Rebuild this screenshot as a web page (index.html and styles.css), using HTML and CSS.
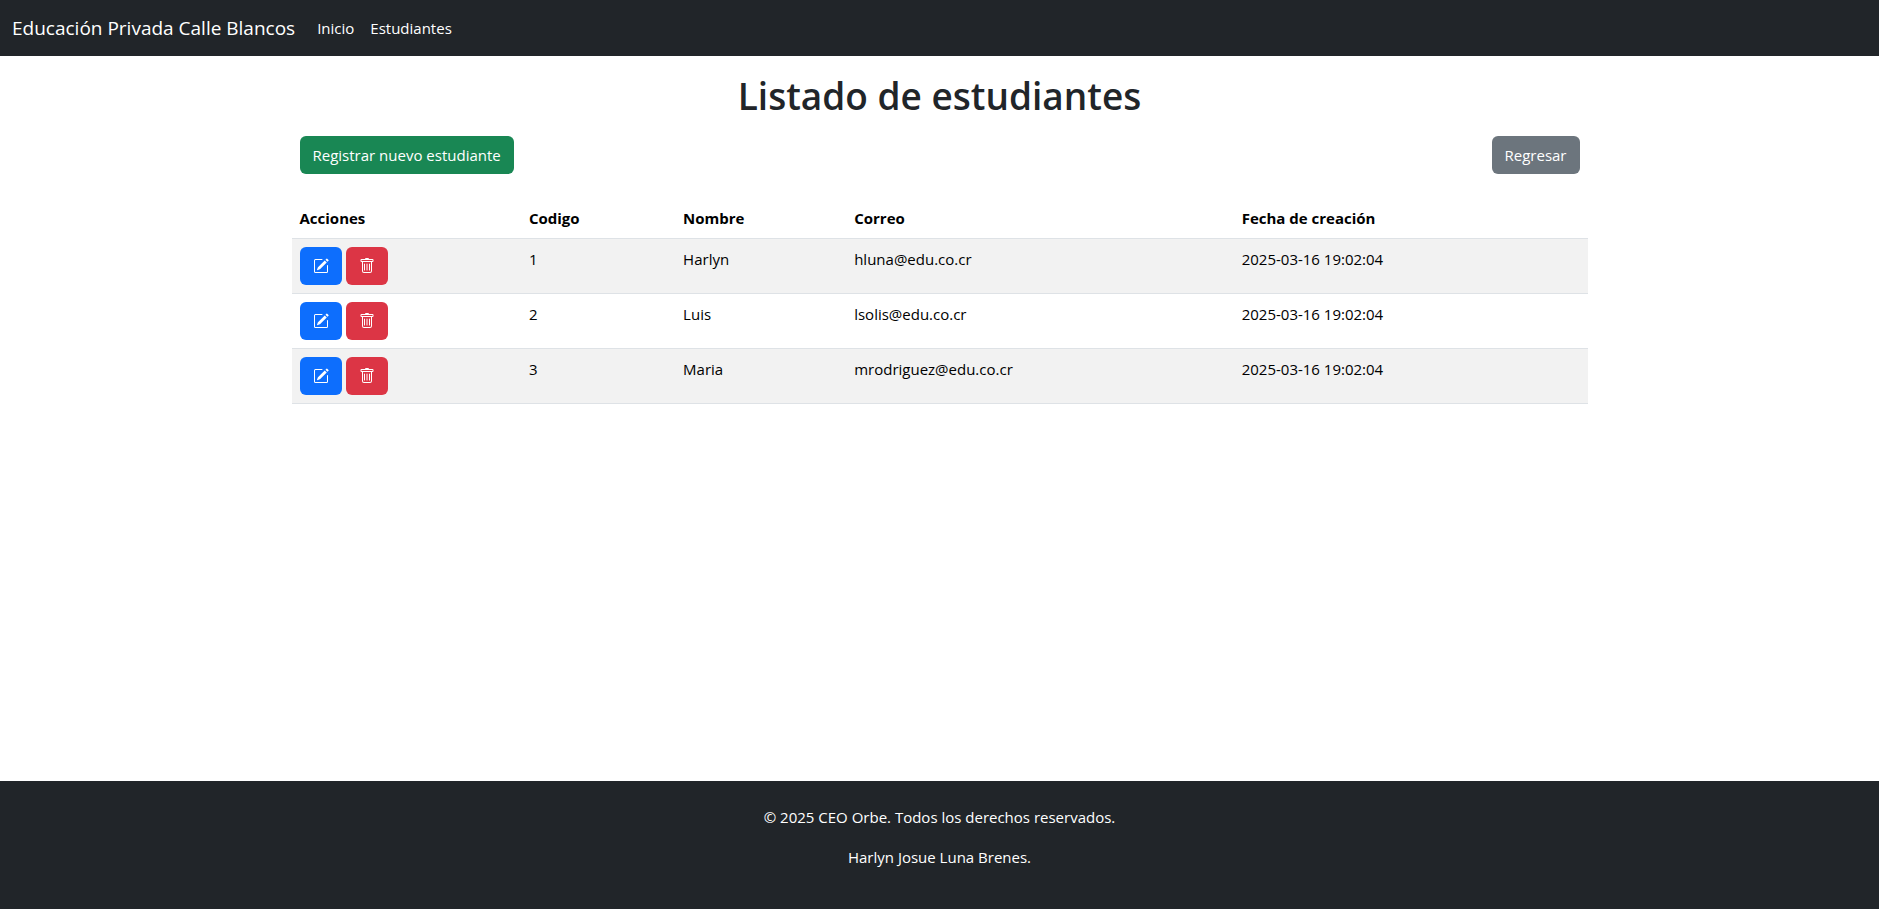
FILE: index.html
```html
<!DOCTYPE html>
<html lang="es">
<head>
<meta charset="utf-8">
<meta name="viewport" content="width=device-width, initial-scale=1">
<title>Listado de estudiantes</title>
<link rel="stylesheet" href="styles.css">
</head>
<body>
<svg class="sprite" aria-hidden="true">
  <symbol id="pencil" viewBox="0 0 16 16">
    <path d="M15.502 1.94a.5.5 0 0 1 0 .706L14.459 3.69l-2-2L13.502.646a.5.5 0 0 1 .707 0l1.293 1.293zm-1.75 2.456-2-2L4.939 9.21a.5.5 0 0 0-.121.196l-.805 2.414a.25.25 0 0 0 .316.316l2.414-.805a.5.5 0 0 0 .196-.12z"/>
    <path fill-rule="evenodd" d="M1 13.5A1.5 1.5 0 0 0 2.5 15h11a1.5 1.5 0 0 0 1.5-1.5v-6a.5.5 0 0 0-1 0v6a.5.5 0 0 1-.5.5h-11a.5.5 0 0 1-.5-.5v-11a.5.5 0 0 1 .5-.5H9a.5.5 0 0 0 0-1H2.5A1.5 1.5 0 0 0 1 2.5z"/>
  </symbol>
  <symbol id="trash" viewBox="0 0 16 16">
    <path d="M5.5 5.5A.5.5 0 0 1 6 6v6a.5.5 0 0 1-1 0V6a.5.5 0 0 1 .5-.5m2.5 0a.5.5 0 0 1 .5.5v6a.5.5 0 0 1-1 0V6a.5.5 0 0 1 .5-.5m3 .5a.5.5 0 0 0-1 0v6a.5.5 0 0 0 1 0z"/>
    <path d="M14.5 3a1 1 0 0 1-1 1H13v9a2 2 0 0 1-2 2H5a2 2 0 0 1-2-2V4h-.5a1 1 0 0 1-1-1V2a1 1 0 0 1 1-1H6a1 1 0 0 1 1-1h2a1 1 0 0 1 1 1h3.5a1 1 0 0 1 1 1zM4.118 4 4 4.059V13a1 1 0 0 0 1 1h6a1 1 0 0 0 1-1V4.059L11.882 4zM2.5 3h11V2h-11z"/>
  </symbol>
</svg>
<nav class="navbar">
  <a class="brand" href="#">Educación Privada Calle Blancos</a>
  <a class="nav-link" href="#">Inicio</a>
  <a class="nav-link" href="#">Estudiantes</a>
</nav>
<main class="container">
  <h1 class="title">Listado de estudiantes</h1>
  <div class="toolbar">
    <a class="btn btn-success" href="#">Registrar nuevo estudiante</a>
    <a class="btn btn-secondary" href="#">Regresar</a>
  </div>
  <table class="table">
    <colgroup>
      <col class="col-actions"><col class="col-code"><col class="col-name"><col class="col-mail"><col>
    </colgroup>
    <thead>
      <tr><th scope="col">Acciones</th><th scope="col">Codigo</th><th scope="col">Nombre</th><th scope="col">Correo</th><th scope="col">Fecha de creación</th></tr>
    </thead>
    <tbody>
      <tr>
        <td><div class="actions">
          <a class="btn btn-primary" href="#" aria-label="Editar"><svg class="icon"><use href="#pencil"/></svg></a>
          <button class="btn btn-danger" type="button" aria-label="Eliminar"><svg class="icon"><use href="#trash"/></svg></button>
        </div></td>
        <td>1</td><td>Harlyn</td><td>hluna@edu.co.cr</td><td>2025-03-16 19:02:04</td>
      </tr>
      <tr>
        <td><div class="actions">
          <a class="btn btn-primary" href="#" aria-label="Editar"><svg class="icon"><use href="#pencil"/></svg></a>
          <button class="btn btn-danger" type="button" aria-label="Eliminar"><svg class="icon"><use href="#trash"/></svg></button>
        </div></td>
        <td>2</td><td>Luis</td><td>lsolis@edu.co.cr</td><td>2025-03-16 19:02:04</td>
      </tr>
      <tr>
        <td><div class="actions">
          <a class="btn btn-primary" href="#" aria-label="Editar"><svg class="icon"><use href="#pencil"/></svg></a>
          <button class="btn btn-danger" type="button" aria-label="Eliminar"><svg class="icon"><use href="#trash"/></svg></button>
        </div></td>
        <td>3</td><td>Maria</td><td>mrodriguez@edu.co.cr</td><td>2025-03-16 19:02:04</td>
      </tr>
    </tbody>
  </table>
</main>
<footer class="footer">
  <p>© 2025 CEO Orbe. Todos los derechos reservados.</p>
  <p>Harlyn Josue Luna Brenes.</p>
</footer>
</body>
</html>
```
FILE: styles.css
```css
* { box-sizing: border-box; }

body {
  margin: 0;
  min-height: 100vh;
  display: flex;
  flex-direction: column;
  background: #fff;
  color: #212529;
  font: 400 15px/24px "Open Sans", "Noto Sans", sans-serif;
}

a { color: inherit; text-decoration: none; }

.sprite { display: none; }

.navbar {
  display: flex;
  align-items: center;
  min-height: 56px;
  padding: 8px 12px;
  background: #212529;
  color: #fff;
}
.brand { margin-right: 14px; font-size: 19px; line-height: 30px; }
.nav-link { padding: 8px; }

.container {
  flex: 1;
  width: 100%;
  max-width: 1320px;
  margin: 0 auto;
  padding: 16px 12px 0;
}
.title {
  margin: 0 0 8px;
  font-size: 37px;
  font-weight: 600;
  line-height: 48px;
  text-align: center;
}
.toolbar {
  display: flex;
  justify-content: space-between;
  padding: 8px 8px 24px;
}

.btn {
  display: inline-flex;
  align-items: center;
  padding: 6px 12px;
  border: 1px solid transparent;
  border-radius: 6px;
  color: #fff;
  font: inherit;
  cursor: pointer;
}
.btn-success { background: #198754; }
.btn-secondary { background: #6c757d; }
.btn-primary { background: #0d6efd; }
.btn-danger { background: #dc3545; }

.table {
  width: 100%;
  table-layout: fixed;
  border-collapse: separate;
  border-spacing: 0;
  color: #000;
}
.table th, .table td {
  padding: 8px;
  border-bottom: 1px solid #dee2e6;
  text-align: left;
  vertical-align: top;
}
.table th { font-weight: 700; }
.table tbody tr:nth-child(odd) { background: #f2f2f2; }
.col-actions { width: 17.7%; }
.col-code { width: 11.9%; }
.col-name { width: 13.2%; }
.col-mail { width: 29.9%; }

.actions { display: flex; gap: 4px; }
.actions .btn { height: 38px; }
.icon { display: block; width: 16px; height: 16px; fill: currentColor; }

.footer {
  padding: 24px 12px 8px;
  background: #212529;
  color: #fff;
  text-align: center;
}
.footer p { margin: 0 0 16px; }
.footer p:last-child { margin-bottom: 32px; }
```
